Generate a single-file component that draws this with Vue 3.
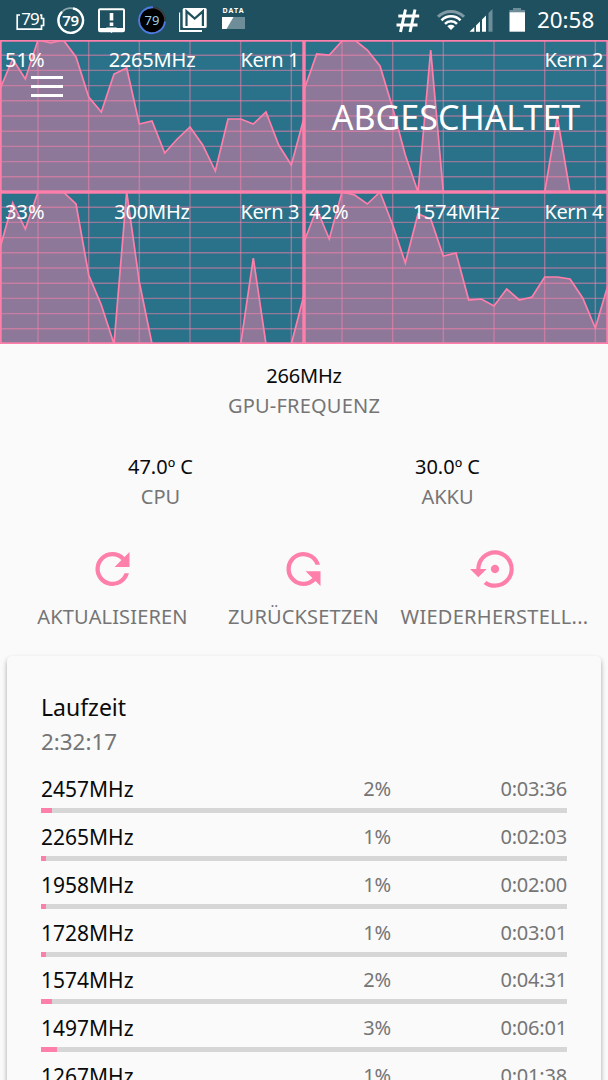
<script setup>

import { computed } from 'vue'

const STEP = 304 / 24

const cores = [
  {
    name: 'Kern 1', load: '51%', freq: '2265MHz',
    points: [49, 19, 39, 0, 3, 0, 17, 57, 72, 34, 28, 84, 81, 113, 99, 87, 105, 131, 79, 79, 84, 72, 105, 125, 78]
  },
  {
    name: 'Kern 2', offline: true,
    points: [50, 14, 15, 1, 0, 10, 26, 68, 115, 152, 10, 152, 152, 152, 152, 152, 152, 152, 152, 152, 77, 152, 152, 152, 152]
  },
  {
    name: 'Kern 3', load: '33%', freq: '300MHz',
    points: [56, 11, 37, 0, 0, 0, 12, 83, 113, 152, 0, 90, 152, 152, 152, 152, 152, 152, 152, 152, 66, 152, 152, 152, 103]
  },
  {
    name: 'Kern 4', load: '42%', freq: '1574MHz',
    points: [50, 17, 47, 0, 3, 12, 0, 33, 71, 22, 27, 64, 61, 108, 107, 114, 97, 108, 105, 85, 85, 87, 106, 136, 93]
  }
]

const charts = computed(() => cores.map(c => {
  const line = c.points.map((y, i) => `${(i * STEP).toFixed(1)},${y}`).join(' ')
  return { ...c, line, area: `0,152 ${line} 304,152` }
}))

const gridX = [0, 1, 2, 3, 4, 5].map(i => 38 + i * STEP * 4)
const gridY = [1, 2, 3, 4, 5, 6, 7, 8, 9].map(i => i * 15.2)

const times = [
  { freq: '2457MHz', pct: 2, time: '0:03:36' },
  { freq: '2265MHz', pct: 1, time: '0:02:03' },
  { freq: '1958MHz', pct: 1, time: '0:02:00' },
  { freq: '1728MHz', pct: 1, time: '0:03:01' },
  { freq: '1574MHz', pct: 2, time: '0:04:31' },
  { freq: '1497MHz', pct: 3, time: '0:06:01' },
  { freq: '1267MHz', pct: 1, time: '0:01:38' }
]

</script>

<template>
  <div class="screen">
    <header class="status">
      <div class="group">
        <svg width="30" height="40" viewBox="15 0 30 40">
          <path d="M20 15H17.2V29.2H41.5V25.5H43.6V18.5H41.5V15H40" fill="none" stroke="#fff" stroke-width="1.7" />
          <text x="30.5" y="25" font-size="17" text-anchor="middle" textLength="18.5" fill="#fff">79</text>
        </svg>
        <svg width="30" height="40" viewBox="56 0 30 40">
          <circle cx="70.7" cy="20.5" r="12.3" fill="none" stroke="#8fa8b0" stroke-width="1.8" />
          <path d="M73 8.4A12.3 12.3 0 1 1 62 11.8" fill="none" stroke="#fff" stroke-width="2.4" />
          <text x="70.7" y="26" font-size="15" font-weight="600" text-anchor="middle" textLength="17" fill="#fff">79</text>
        </svg>
        <svg width="30" height="40" viewBox="97 0 30 40">
          <path d="M100 9.2H123Q124 9.2 124 10.2V30.3Q124 31.3 123 31.3H100Q99 31.3 99 30.3V10.2Q99 9.2 100 9.2Z" fill="none" stroke="#fff" stroke-width="2" />
          <path d="M99 28H124V32H99Z" fill="#fff" />
          <path d="M106 27.5H117L111.5 33Z" fill="#fff" />
          <path d="M109.7 13H113.3V20.5H109.7ZM109.7 22.5H113.3V26H109.7Z" fill="#fff" />
        </svg>
        <svg width="30" height="40" viewBox="137 0 30 40">
          <circle cx="151" cy="20.3" r="13.5" fill="#000" />
          <circle cx="151" cy="20.3" r="13" fill="none" stroke="#3d3f42" stroke-width="1.8" />
          <path d="M164 21.5A13 13 0 1 1 152 7.3" fill="none" stroke="#4a7be0" stroke-width="1.9" />
          <text x="151" y="25" font-size="13" text-anchor="middle" textLength="15" fill="#9fd0e6">79</text>
        </svg>
        <svg width="32" height="40" viewBox="179 0 32 40">
          <path d="M179.2 12.5V31H202" fill="none" stroke="#fff" stroke-width="1.9" />
          <rect x="182.7" y="8" width="24" height="20" rx="1.5" fill="#fff" />
          <path d="M186.5 26V11.3L194.7 18.5L202.9 11.3V26" fill="none" stroke="#1e5060" stroke-width="2.2" />
        </svg>
        <svg width="26" height="40" viewBox="222 0 26 40">
          <text x="222.5" y="13.2" font-size="7" font-weight="700" textLength="21" fill="#fff">DATA</text>
          <path d="M221 17H245V29H221Z" fill="#6d8d99" />
          <path d="M221 17H233.5L226.5 29H221Z" fill="#fff" />
        </svg>
      </div>
      <div class="group right">
        <svg width="26" height="40" viewBox="395 0 26 40">
          <path d="M405.5 9.5L400.5 32M415 9.5L410 32M398.3 16H419.2M396.5 25H417.5" fill="none" stroke="#fff" stroke-width="3" />
        </svg>
        <svg width="30" height="40" viewBox="436 0 30 40">
          <path d="M438 16.8A18.3 18.3 0 0 1 464 16.8" fill="none" stroke="#7f9aa4" stroke-width="3" />
          <g fill="none" stroke="#fff" stroke-width="2.6">
            <path d="M441.5 20.3A13.3 13.3 0 0 1 460.5 20.3" />
            <path d="M445 23.8A8.5 8.5 0 0 1 457 23.8" />
          </g>
          <path d="M447.3 26.3Q451 23.4 454.7 26.3L451 30Z" fill="#fff" />
        </svg>
        <svg width="26" height="40" viewBox="468 0 26 40">
          <path d="M469.5 31.8L474.3 27V31.8ZM476 25.5L480 21.5V31.8H476ZM482 19.5L486 15.5V31.8H482Z" fill="#fff" />
          <path d="M488.5 13L492.5 9V31.8H488.5Z" fill="#6d8d99" />
        </svg>
        <svg width="18" height="40" viewBox="508 0 18 40">
          <path d="M513 8H521V10H525V13H509.5V10H513Z" fill="#6d8d99" />
          <path d="M509.5 12.3H525V31.7H509.5Z" fill="#fff" />
        </svg>
        <span class="clock">20:58</span>
      </div>
    </header>

    <section class="charts">
      <div v-for="core in charts" :key="core.name" class="chart">
        <svg width="304" height="152" viewBox="0 0 304 152">
          <polygon :points="core.area" fill="#ff7fab" fill-opacity="0.47" />
          <g stroke="#ff7fab" stroke-opacity="0.5" stroke-width="1.4">
            <line v-for="x in gridX" :key="'x' + x" :x1="x" :x2="x" y1="0" y2="152" />
            <line v-for="y in gridY" :key="'y' + y" x1="0" x2="304" :y1="y" :y2="y" />
          </g>
          <polyline :points="core.line" fill="none" stroke="#ff7fab" stroke-width="1.7" />
          <rect x="0.6" y="0.6" width="302.8" height="150.8" fill="none" stroke="#ff7fab" stroke-width="2.2" />
        </svg>
        <div class="labels">
          <span>{{ core.load }}</span>
          <span class="mid">{{ core.freq }}</span>
          <span class="end">{{ core.name }}</span>
        </div>
        <div v-if="core.offline" class="offline">ABGESCHALTET</div>
      </div>
      <div class="menu"><i></i><i></i><i></i></div>
    </section>

    <section class="stat gpu">
      <b>266MHz</b>
      <span>GPU-FREQUENZ</span>
    </section>

    <section class="temps">
      <div class="stat">
        <b>47.0º C</b>
        <span>CPU</span>
      </div>
      <div class="stat">
        <b>30.0º C</b>
        <span>AKKU</span>
      </div>
    </section>

    <section class="actions">
      <div class="action refresh">
        <svg width="51" height="52" viewBox="0 0 24 24">
          <path d="M17.65 6.35A7.958 7.958 0 0 0 12 4a8 8 0 1 0 7.73 10h-2.08A6 6 0 1 1 12 6c1.66 0 3.14.69 4.22 1.78L13 11h7V4l-2.35 2.35z" />
        </svg>
        <span>AKTUALISIEREN</span>
      </div>
      <div class="action reset">
        <svg width="51" height="52" viewBox="0 0 24 24">
          <path transform="matrix(1 0 0 -1 0 24)" d="M17.65 6.35A7.958 7.958 0 0 0 12 4a8 8 0 1 0 7.73 10h-2.08A6 6 0 1 1 12 6c1.66 0 3.14.69 4.22 1.78L13 11h7V4l-2.35 2.35z" />
        </svg>
        <span>ZURÜCKSETZEN</span>
      </div>
      <div class="action restore">
        <svg width="50" height="52" viewBox="0 0 24 24">
          <path d="M14 12c0-1.1-.9-2-2-2s-2 .9-2 2 .9 2 2 2 2-.9 2-2zm-2-9a9 9 0 0 0-9 9H0l4 4 4-4H5c0-3.870 3.130-7 7-7s7 3.130 7 7-3.130 7-7 7c-1.510 0-2.910-.490-4.060-1.300l-1.420 1.440A8.950 8.950 0 0 0 12 21a9 9 0 0 0 0-18z" />
        </svg>
        <span class="wide">WIEDERHERSTELL...</span>
      </div>
    </section>

    <section class="card">
      <h2>Laufzeit</h2>
      <p class="total">2:32:17</p>
      <div v-for="t in times" :key="t.freq" class="row">
        <div class="cells">
          <span class="freq">{{ t.freq }}</span>
          <span class="pct">{{ t.pct }}%</span>
          <span class="time">{{ t.time }}</span>
        </div>
        <div class="bar"><div class="fill" :style="{ width: t.pct + '%' }"></div></div>
      </div>
    </section>
  </div>
</template>

<style>
body {
  background: #fafafa;
  overflow: hidden;
}
</style>

<style scoped>
.screen {
  width: 608px;
  height: 1080px;
  overflow: hidden;
  background: #fafafa;
  color: #0a0a0a;
  font-family: "Noto Sans", sans-serif;
  font-size: 20px;
}

svg {
  display: block;
  flex: none;
}

.status {
  height: 40px;
  display: flex;
  justify-content: space-between;
  padding: 0 14px 0 15px;
  background: #1e5060;
}
.group {
  display: flex;
  align-items: center;
  gap: 11px;
}
.group.right {
  gap: 0;
}
.group.right svg:nth-child(2) {
  margin-left: 15px;
}
.group.right svg:nth-child(3) {
  margin-left: 2px;
}
.group.right svg:nth-child(4) {
  margin-left: 14px;
}
.clock {
  width: 57px;
  margin-left: 11px;
  color: #fff;
  font-size: 22.4px;
  line-height: 40px;
  white-space: nowrap;
}

.charts {
  position: relative;
  display: grid;
  grid-template-columns: 304px 304px;
  grid-template-rows: 152px 152px;
  background: #2a728a;
}
.chart {
  position: relative;
  color: #fff;
}
.labels {
  position: absolute;
  top: 6px;
  left: 5px;
  right: 5px;
  display: grid;
  grid-template-columns: 1fr auto 1fr;
  line-height: 28px;
}
.mid {
  letter-spacing: -0.2px;
}
.end {
  text-align: right;
  letter-spacing: -0.4px;
}
.offline {
  position: absolute;
  top: 52px;
  left: 0;
  width: 304px;
  text-align: center;
  font-size: 34px;
  line-height: 50px;
}
.menu {
  position: absolute;
  left: 31px;
  top: 36px;
  width: 32px;
  display: flex;
  flex-direction: column;
  gap: 6px;
}
.menu i {
  height: 3px;
  background: #fff;
}

.stat {
  display: flex;
  flex-direction: column;
  align-items: center;
  line-height: 30px;
}
.stat b {
  font-weight: 400;
}
.stat span {
  color: #757575;
}
.gpu {
  padding-top: 17px;
}
.gpu b {
  letter-spacing: -0.2px;
}
.gpu span {
  letter-spacing: 0.2px;
}
.temps {
  display: grid;
  grid-template-columns: 1fr 1fr;
  padding: 31px 17px 0;
}

.actions {
  display: grid;
  grid-template-columns: repeat(3, 191px);
  padding: 31px 17px 0;
}
.action {
  display: flex;
  flex-direction: column;
  align-items: center;
  gap: 7px;
  color: #757575;
  line-height: 30px;
  letter-spacing: 0.15px;
  white-space: nowrap;
}
.action .wide {
  letter-spacing: 0.27px;
}
.action svg {
  fill: #ff7fab;
}

.card {
  height: 500px;
  margin: 24px 7px 0;
  padding: 35px 34px 0;
  border-radius: 5px;
  background: #fafafa;
  box-shadow: 0 3px 5px rgba(0, 0, 0, 0.35);
}
.card h2 {
  margin: 0;
  font-size: 23px;
  font-weight: 400;
  line-height: 32px;
}
.total {
  margin: 0 0 8px;
  color: #757575;
  font-size: 22.4px;
  line-height: 37px;
}
.row {
  height: 47.85px;
}
.cells {
  display: grid;
  grid-template-columns: 200px 150px 1fr;
  line-height: 42px;
  height: 40px;
}
.freq {
  font-size: 21px;
}
.pct,
.time {
  color: #757575;
  text-align: right;
  letter-spacing: -0.2px;
}
.bar {
  height: 5px;
  background: #d6d6d6;
}
.fill {
  height: 5px;
  background: #ff7fab;
}
</style>
